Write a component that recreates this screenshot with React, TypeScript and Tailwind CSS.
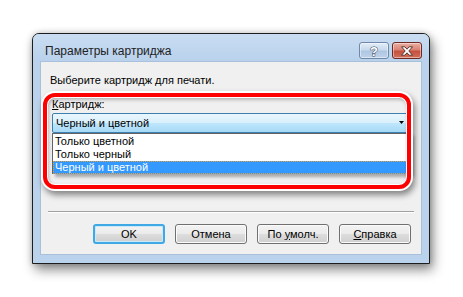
const font = "font-['Liberation_Sans',Arial,sans-serif]";

const TitleButton = ({ kind }: { kind: 'help' | 'close' }) => {
  const isClose = kind === 'close';
  return (
    <div
      className={
        'w-[30px] h-[17px] rounded-[3px] border flex items-center justify-center shadow-[inset_0_0_0_1px_rgba(255,255,255,0.45)] ' +
        (isClose
          ? 'border-[#6e2a22] bg-[linear-gradient(#eab0a4,#d98272_45%,#c5503f_55%,#d0705c)]'
          : 'border-[#6f88a8] bg-[linear-gradient(#e3edf8,#c8d9ee_45%,#afc6e2_55%,#bed2ea)]')
      }
    >
      {isClose ? (
        <svg width="14" height="10" viewBox="0 0 14 10">
          <path
            d="M1.5 0.8 H4.8 L7 3.2 L9.2 0.8 H12.5 L8.8 5 L12.5 9.2 H9.2 L7 6.8 L4.8 9.2 H1.5 L5.2 5 Z"
            fill="#fff"
            stroke="#4a2a26"
            strokeWidth="0.9"
            strokeLinejoin="round"
          />
        </svg>
      ) : (
        <svg width="12" height="13" viewBox="0 0 12 13">
          <text
            x="6"
            y="11.5"
            textAnchor="middle"
            fontFamily="Liberation Sans, Arial, sans-serif"
            fontWeight="bold"
            fontSize="13"
            fill="#fff"
            stroke="#3b4a5e"
            strokeWidth="1"
            paintOrder="stroke"
          >
            ?
          </text>
        </svg>
      )}
    </div>
  );
};

const DlgButton = ({ children, main }: { children: React.ReactNode; main?: boolean }) => (
  <div
    className={
      'w-[72px] h-[20px] rounded-[3px] flex items-center justify-center text-[11px] text-black leading-none bg-[linear-gradient(#f3f3f3,#ebebeb_48%,#dddddd_52%,#cfcfcf)] ' +
      (main
        ? 'border-2 border-[#3fa9e6] shadow-[inset_0_0_0_1px_#cde8f8]'
        : 'border border-[#707070] shadow-[inset_0_0_0_1px_#fbfbfb]')
    }
  >
    {children}
  </div>
);

export default function App() {
  return (
    <div className={'w-[463px] h-[297px] bg-white pt-[33px] pl-[32px] ' + font}>
      <div className="w-[398px] h-[231px] rounded-t-[7px] border border-[#1e1e1e] bg-[#bad2ec] flex flex-col shadow-[3px_6px_12px_rgba(0,0,0,0.45),0_0_6px_rgba(0,0,0,0.2)]">
        {/* title bar */}
        <div className="h-[27px] flex items-center pt-[6px] pl-[12px] pr-[7px] rounded-t-[6px] bg-[linear-gradient(#c9ddf2,#b9d1ec)]">
          <span className="flex-1 text-[12px] text-[#222]">Параметры картриджа</span>
          <div className="flex gap-[3px]">
            <TitleButton kind="help" />
            <TitleButton kind="close" />
          </div>
        </div>

        {/* client */}
        <div className="relative mx-[7px] h-[194px] bg-[#f0f0f0] border border-[#a9c0da] flex flex-col text-[11px] text-black">
          <div className="mt-[10px] pl-[9px] leading-[16px]">Выберите картридж для печати.</div>
          <div className="mt-[8px] pl-[11px] leading-[16px]">
            <span className="underline">К</span>артридж:
          </div>
          <div className="ml-[11px] mt-[1px] w-[361px] h-[20px] border border-[#3c7fb1] rounded-[2px] flex items-center pl-[3px] bg-[linear-gradient(#eaf6fd,#d9f0fc_48%,#bee6fd_52%,#a7d9f5)]">
            <span className="flex-1">Черный и цветной</span>
            <svg width="5" height="3" viewBox="0 0 5 3" className="mr-[8px] mb-[2px]">
              <path d="M0 0 H5 L2.5 3 Z" fill="#000" />
            </svg>
          </div>

          <div className="mt-[78px] mx-[7px] h-[2px] border-t border-[#a0a0a0] border-b border-b-white" />

          <div className="mt-[11px] pr-[10px] flex justify-end gap-[10px]">
            <DlgButton main>OK</DlgButton>
            <DlgButton>Отмена</DlgButton>
            <DlgButton>
              <span>
                По <span className="underline">у</span>молч.
              </span>
            </DlgButton>
            <DlgButton>
              <span>
                <span className="underline">С</span>правка
              </span>
            </DlgButton>
          </div>

          {/* open drop-down list */}
          <div className="absolute left-[11px] top-[71px] w-[359px] h-[41px] bg-white border border-[#646464] pt-[1px] shadow-[3px_3px_3px_rgba(0,0,0,0.3)]">
            <div className="h-[13px] leading-[13px] pl-[2px]">Только цветной</div>
            <div className="h-[13px] leading-[13px] pl-[2px]">Только черный</div>
            <div className="h-[13px] leading-[13px] pl-[1px] bg-[#3399ff] text-white border border-dotted border-[#e0a040]">
              <span className="relative top-[-1px]">Черный и цветной</span>
            </div>
          </div>

          {/* red annotation frame */}
          <div className="absolute left-[2px] top-[31px] w-[368px] h-[96px] rounded-[12px] border-[4px] border-[#ff0000] shadow-[0_0_0_2px_#fff,2px_4px_6px_2px_rgba(0,0,0,0.45),inset_0_0_0_1px_#fff,inset_1px_2px_4px_rgba(0,0,0,0.35)]" />
        </div>
      </div>
    </div>
  );
}
